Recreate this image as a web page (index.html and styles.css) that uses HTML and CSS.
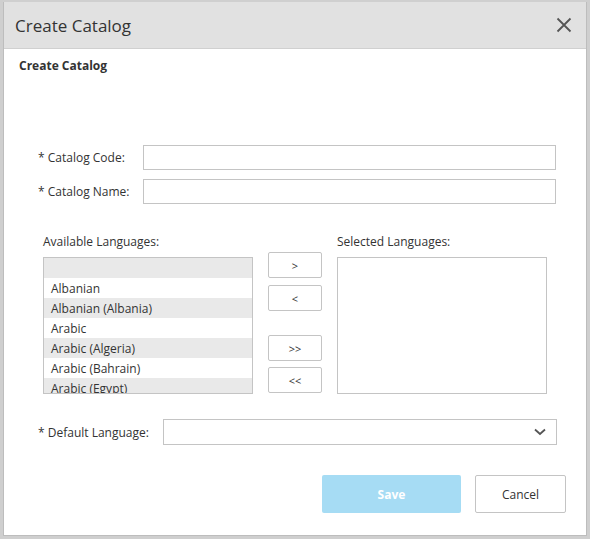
FILE: index.html
```html
<!DOCTYPE html>
<html>
<head>
<meta charset="utf-8">
<link rel="stylesheet" href="styles.css">
</head>
<body>
<div class="dialog">
  <div class="header">
    <span class="title">Create Catalog</span>
    <svg class="close" width="16" height="16" viewBox="0 0 16 16"><path d="M1.5 1.5 L14.5 14.5 M14.5 1.5 L1.5 14.5" stroke="#555" stroke-width="1.8" fill="none"/></svg>
  </div>
  <div class="content">
    <div class="subtitle">Create Catalog</div>
    <div class="fields">
      <label class="lbl">* Catalog Code:</label>
      <div class="input"></div>
      <label class="lbl">* Catalog Name:</label>
      <div class="input"></div>
    </div>
    <div class="langs">
      <div class="col">
        <div class="col-lbl">Available Languages:</div>
        <div class="listbox">
          <div class="row alt"></div>
          <div class="row">Albanian</div>
          <div class="row alt">Albanian (Albania)</div>
          <div class="row">Arabic</div>
          <div class="row alt">Arabic (Algeria)</div>
          <div class="row">Arabic (Bahrain)</div>
          <div class="row alt">Arabic (Egypt)</div>
        </div>
      </div>
      <div class="moves">
        <div class="mbtn">&gt;</div>
        <div class="mbtn">&lt;</div>
        <div class="mbtn gap">&gt;&gt;</div>
        <div class="mbtn last">&lt;&lt;</div>
      </div>
      <div class="col">
        <div class="col-lbl">Selected Languages:</div>
        <div class="listbox"></div>
      </div>
    </div>
    <div class="deflang">
      <label class="lbl">* Default Language:</label>
      <div class="select">
        <svg width="12" height="8" viewBox="0 0 12 8"><path d="M1 1.5 L6 6 L11 1.5" stroke="#555" stroke-width="1.8" fill="none"/></svg>
      </div>
    </div>
    <div class="footer">
      <div class="btn save">Save</div>
      <div class="btn cancel">Cancel</div>
    </div>
  </div>
</div>
</body>
</html>
```
FILE: styles.css
```css
html, body {
  margin: 0;
  padding: 0;
}
body {
  background: #cfcfcf;
  width: 590px;
  height: 539px;
  overflow: hidden;
  font-family: "Open Sans", "Noto Sans", sans-serif;
  color: #333;
}
.dialog {
  margin: 2px 0 0 3px;
  width: 584px;
  height: 534px;
  background: #fff;
  box-sizing: border-box;
  border: 1px solid #bdbdbd;
  border-top: 0;
  display: flex;
  flex-direction: column;
}
.header {
  height: 46px;
  background: #e1e1e1;
  border-bottom: 1px solid #d0d0d0;
  display: flex;
  align-items: center;
  justify-content: space-between;
  padding: 0 14px 0 11px;
  flex-shrink: 0;
}
.title {
  font-size: 17px;
  color: #333;
}
.close {
  display: block;
}
.content {
  padding: 9px 0 0 0;
  flex: 1;
}
.subtitle {
  font-size: 12px;
  font-weight: bold;
  margin-left: 15px;
  line-height: 16px;
}
.fields {
  display: grid;
  grid-template-columns: 105px 413px;
  row-gap: 9px;
  margin: 71px 0 0 34px;
  align-items: center;
}
.lbl {
  font-size: 12px;
  color: #333;
}
.input {
  height: 25px;
  box-sizing: border-box;
  border: 1px solid #c4c4c4;
  background: #fff;
}
.langs {
  display: flex;
  margin: 30px 0 0 39px;
}
.col-lbl {
  font-size: 12px;
  line-height: 16px;
  margin-bottom: 7px;
}
.listbox {
  width: 210px;
  height: 137px;
  box-sizing: border-box;
  border: 1px solid #c4c4c4;
  overflow: hidden;
}
.row {
  height: 20px;
  line-height: 21px;
  font-size: 12px;
  padding-left: 7px;
  color: #333;
  white-space: nowrap;
}
.row.alt {
  background: #e9e9e9;
}
.moves {
  display: flex;
  flex-direction: column;
  gap: 7px;
  margin: 18px 15px 0 15px;
}
.mbtn {
  width: 54px;
  height: 26px;
  box-sizing: border-box;
  border: 1px solid #c4c4c4;
  border-radius: 2px;
  font-size: 11px;
  display: flex;
  align-items: center;
  justify-content: center;
  color: #333;
}
.mbtn.gap {
  margin-top: 17px;
}
.mbtn.last {
  margin-top: -1px;
}
.deflang {
  display: flex;
  align-items: center;
  margin: 25px 0 0 34px;
}
.deflang .lbl {
  width: 125px;
}
.select {
  width: 394px;
  height: 26px;
  box-sizing: border-box;
  border: 1px solid #c4c4c4;
  display: flex;
  align-items: center;
  justify-content: flex-end;
  padding-right: 10px;
}
.select svg {
  display: block;
}
.footer {
  display: flex;
  justify-content: flex-end;
  gap: 14px;
  margin: 30px 20px 0 0;
}
.btn {
  height: 38px;
  box-sizing: border-box;
  display: flex;
  align-items: center;
  justify-content: center;
  font-size: 12px;
}
.save {
  width: 139px;
  background: #a6dcf4;
  color: #fff;
  font-weight: bold;
  border-radius: 2px;
}
.cancel {
  width: 91px;
  border: 1px solid #c4c4c4;
  border-radius: 2px;
  color: #333;
}
```
